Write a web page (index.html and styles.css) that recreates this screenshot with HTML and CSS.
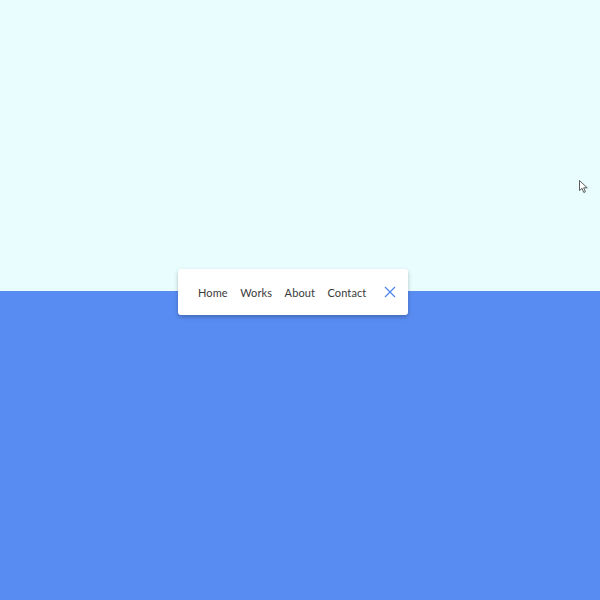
FILE: index.html
```html
<!DOCTYPE html>
<html>
<head>
<meta charset="utf-8">
<link rel="stylesheet" href="styles.css">
</head>
<body>
<div class="page">
  <div class="top"></div>
  <div class="bottom"></div>
  <nav class="menu">
    <a class="item">Home</a>
    <a class="item">Works</a>
    <a class="item">About</a>
    <a class="item">Contact</a>
    <span class="close">
      <svg width="12" height="12" viewBox="0 0 12 12"><path d="M1 1L11 11M11 1L1 11" stroke="#4f86ee" stroke-width="1.3" fill="none"/></svg>
    </span>
  </nav>
  <svg class="cursor" width="10" height="14" viewBox="0 0 10 14"><path d="M0.5 0.5L0.5 10.5L3 8.3L4.8 12.5L6.4 11.8L4.7 7.8L8.2 7.8Z" fill="#fff" stroke="#333" stroke-width="0.8" stroke-linejoin="round"/></svg>
</div>
</body>
</html>
```
FILE: styles.css
```css
html, body { margin: 0; padding: 0; }
body { font-family: "Lato", "Noto Sans", sans-serif; }
.page { position: relative; width: 600px; height: 600px; display: flex; flex-direction: column; overflow: hidden; }
.top { height: 291px; background: #e9fdff; }
.bottom { flex: 1; background: #598cf2; }
.menu {
  position: absolute; left: 178px; top: 269px; width: 230px; height: 46px;
  box-sizing: border-box; background: #fff; border-radius: 3px;
  box-shadow: 0 2px 4px rgba(0,0,0,0.25);
  display: flex; align-items: center; padding-left: 20px; gap: 12.5px;
}
.item { font-size: 11px; color: #3a3a3a; letter-spacing: 0.1px; padding-top: 1px; }
.close { display: flex; margin-left: 5px; }
.cursor { position: absolute; left: 579px; top: 180px; }
```
